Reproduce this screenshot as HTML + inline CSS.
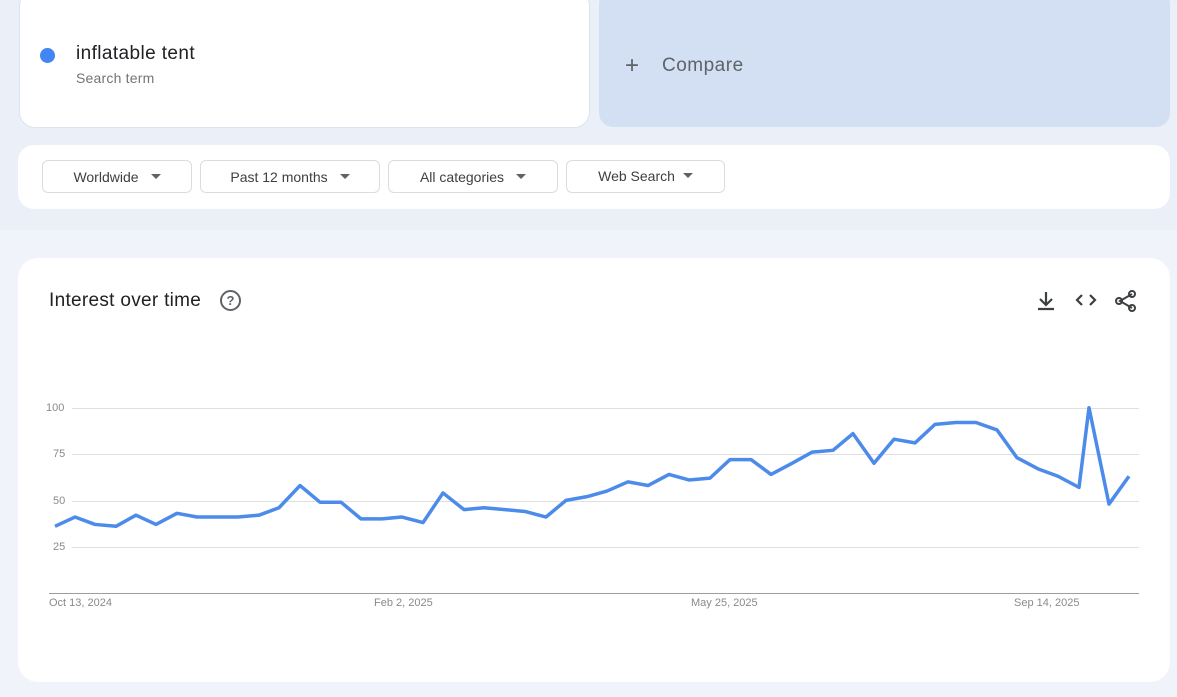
<!DOCTYPE html>
<html><head><meta charset="utf-8"><style>
body{margin:0;width:1177px;height:697px;background:#f0f3f9;font-family:"Liberation Sans",sans-serif;position:relative;overflow:hidden}
.top{position:absolute;left:0;top:0;width:1177px;height:230px;background:#ebf0f8}
.card{position:absolute;background:#fff;border-radius:16px}
.btn{position:absolute;top:160px;height:33px;border:1px solid #dadce0;border-radius:6px;background:#fff;font-size:14px;color:#3c4043;display:flex;align-items:center;justify-content:center;box-sizing:border-box}
.btn i{display:inline-block;width:0;height:0;border-left:5px solid transparent;border-right:5px solid transparent;border-top:5px solid #5f6368;margin-left:12px}
.t{position:absolute;font-size:11px;color:#8a8a8a}
</style></head><body>
<div class="top"></div>
<div class="card" style="left:19px;top:-10px;width:571px;height:138px;border:1px solid #dde3ec;box-sizing:border-box"></div>
<div style="position:absolute;left:40px;top:48px;width:15px;height:15px;border-radius:50%;background:#4285f4"></div>
<div style="position:absolute;left:76px;top:43px;font-size:19px;color:#202124;letter-spacing:0.4px">inflatable tent</div>
<div style="position:absolute;left:76px;top:70px;font-size:14px;color:#70757a;letter-spacing:0.2px">Search term</div>
<div style="position:absolute;left:599px;top:-10px;width:571px;height:137px;background:#d3e0f3;border-radius:14px"></div>
<div style="position:absolute;left:625px;top:52px;font-size:24px;color:#5f6368;font-weight:300">+</div>
<div style="position:absolute;left:662px;top:55px;font-size:19px;color:#5f6368;letter-spacing:0.5px">Compare</div>
<div class="card" style="left:18px;top:145px;width:1152px;height:64px"></div>
<div class="btn" style="left:42px;width:150px">Worldwide<i></i></div>
<div class="btn" style="left:200px;width:180px">Past 12 months<i></i></div>
<div class="btn" style="left:388px;width:170px">All categories<i></i></div>
<div class="btn" style="left:566px;width:159px;padding-bottom:2px">Web Search<i style="margin-left:8px"></i></div>
<div class="card" style="left:18px;top:258px;width:1152px;height:424px;border-radius:20px"></div>
<div style="position:absolute;left:49px;top:290px;font-size:19px;color:#202124;letter-spacing:0.3px">Interest over time</div>
<div style="position:absolute;left:220px;top:290px;width:17px;height:17px;border:2px solid #5f6368;border-radius:50%;font-size:13px;font-weight:bold;color:#5f6368;text-align:center;line-height:17px">?</div>
<svg style="position:absolute;left:0;top:0" width="1177" height="697">
<g stroke="#3c4043" stroke-width="2.2" fill="none">
<path d="M1046 292v13M1040 299l6 6 6-6M1038 309h16"/>
<path d="M1082 295l-5 5 5 5M1090 295l5 5-5 5"/>
</g>
<g stroke="#3c4043" stroke-width="2" fill="none"><path d="M1132 294l-12 7 12 7"/></g>
<circle cx="1132" cy="294" r="3" fill="none" stroke="#3c4043" stroke-width="2"/>
<circle cx="1119" cy="301" r="3" fill="none" stroke="#3c4043" stroke-width="2"/>
<circle cx="1132" cy="308" r="3" fill="none" stroke="#3c4043" stroke-width="2"/>
<g stroke="#e0e0e0" stroke-width="1"><path d="M72 408.5H1139M72 454.5H1139M72 501.5H1139M72 547.5H1139"/></g>
<path d="M49 593.5H1139" stroke="#9e9e9e"/>
<g transform="translate(0,593) scale(1,-1.853)">
<polyline vector-effect="non-scaling-stroke" fill="none" stroke="#4c8bea" stroke-width="3.5" stroke-linejoin="round" points="55,36 75,41 95,37 116,36 136,42 156,37 177,43 197,41 218,41 238,41 259,42 279,46 300,58 320,49 341,49 361,40 382,40 402,41 423,38 443,54 464,45 484,46 505,45 525,44 546,41 566,50 587,52 607,55 628,60 648,58 669,64 689,61 710,62 730,72 751,72 771,64 792,70 812,76 833,77 853,86 874,70 894,83 915,81 935,91 956,92 976,92 997,88 1017,73 1038,67 1058,63 1079,57 1089,100 1109,48 1129,63"/>
</g>
</svg>
<div class="t" style="left:46px;top:402px">100</div>
<div class="t" style="left:53px;top:448px">75</div>
<div class="t" style="left:53px;top:495px">50</div>
<div class="t" style="left:53px;top:541px">25</div>
<div class="t" style="left:49px;top:597px">Oct 13, 2024</div>
<div class="t" style="left:374px;top:597px">Feb 2, 2025</div>
<div class="t" style="left:691px;top:597px">May 25, 2025</div>
<div class="t" style="left:1014px;top:597px">Sep 14, 2025</div>
</body></html>
